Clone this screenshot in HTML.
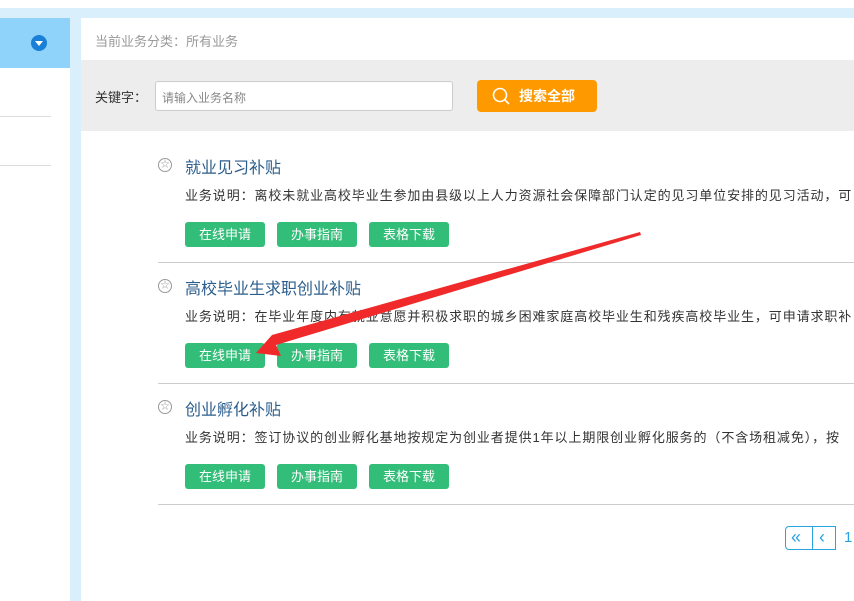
<!DOCTYPE html>
<html><head><meta charset="utf-8"><style>
*{margin:0;padding:0;box-sizing:border-box}
body{width:854px;height:601px;overflow:hidden;background:#fff;font-family:"Liberation Sans","Noto Sans CJK SC",sans-serif;position:relative}
.a{position:absolute}
.btn{position:absolute;width:80px;height:25px;background:#32bd78;border-radius:3px;color:#fff;font-size:13px;text-align:center;line-height:25px}
.t{position:absolute;left:185px;font-size:16px;color:#2b5d8c}
.d{position:absolute;left:185px;font-size:13px;color:#333;white-space:nowrap;letter-spacing:0.9px}
.ic{position:absolute;left:158px;width:14px;height:14px;border:1.5px solid #999;border-radius:50%;font-size:9px;line-height:11px;text-align:center;color:#999}
.sep{position:absolute;left:158px;right:0;height:1px;background:#ccc}
</style></head><body>
<div class="a" style="left:0;top:8px;width:854px;height:10px;background:#d9f0fc"></div>
<div class="a" style="left:70px;top:8px;width:11px;height:593px;background:#d9f0fc"></div>
<div class="a" style="left:0;top:18px;width:70px;height:50px;background:#8fd3fb"></div>
<div class="a" style="left:31px;top:35px;width:16px;height:16px;border-radius:50%;background:#1a7fd6"></div>
<div class="a" style="left:35px;top:41px;width:0;height:0;border-left:4px solid transparent;border-right:4px solid transparent;border-top:5px solid #fff"></div>
<div class="a" style="left:0;top:116px;width:51px;height:1px;background:#ddd"></div>
<div class="a" style="left:0;top:165px;width:51px;height:1px;background:#ddd"></div>
<div class="a" style="left:95px;top:31px;font-size:13px;color:#999">当前业务分类：所有业务</div>
<div class="a" style="left:81px;top:60px;width:773px;height:71px;background:#ededed"></div>
<div class="a" style="left:95px;top:87px;font-size:13px;color:#333">关键字：</div>
<div class="a" style="left:155px;top:81px;width:298px;height:30px;background:#fff;border:1px solid #ccc;border-radius:3px;font-size:12px;color:#888;padding:7px 6px">请输入业务名称</div>
<div class="a" style="left:477px;top:80px;width:120px;height:32px;background:#ff9900;border-radius:4px;color:#fff;font-size:14px;font-weight:bold;line-height:32px;padding-left:42px">搜索全部</div>
<svg class="a" style="left:491px;top:86px" width="22" height="22"><circle cx="9" cy="9" r="6.5" fill="none" stroke="#fff" stroke-width="1.6"/><line x1="13.5" y1="13.5" x2="18" y2="18" stroke="#fff" stroke-width="1.6"/></svg>

<div class="ic" style="top:158px">☆</div>
<div class="t" style="top:154px">就业见习补贴</div>
<div class="d" style="top:185px">业务说明：离校未就业高校毕业生参加由县级以上人力资源社会保障部门认定的见习单位安排的见习活动，可</div>
<div class="btn" style="left:185px;top:222px">在线申请</div><div class="btn" style="left:277px;top:222px">办事指南</div><div class="btn" style="left:369px;top:222px">表格下载</div>
<div class="sep" style="top:262px"></div>

<div class="ic" style="top:279px">☆</div>
<div class="t" style="top:275px">高校毕业生求职创业补贴</div>
<div class="d" style="top:306px">业务说明：在毕业年度内有就业意愿并积极求职的城乡困难家庭高校毕业生和残疾高校毕业生，可申请求职补</div>
<div class="btn" style="left:185px;top:343px">在线申请</div><div class="btn" style="left:277px;top:343px">办事指南</div><div class="btn" style="left:369px;top:343px">表格下载</div>
<div class="sep" style="top:383px"></div>

<div class="ic" style="top:400px">☆</div>
<div class="t" style="top:396px">创业孵化补贴</div>
<div class="d" style="top:427px">业务说明：签订协议的创业孵化基地按规定为创业者提供1年以上期限创业孵化服务的（不含场租减免），按</div>
<div class="btn" style="left:185px;top:464px">在线申请</div><div class="btn" style="left:277px;top:464px">办事指南</div><div class="btn" style="left:369px;top:464px">表格下载</div>
<div class="sep" style="top:504px"></div>

<div class="a" style="left:785px;top:526px;width:51px;height:24px;border:1px solid #29a3e0;border-radius:4px 0 0 4px"></div>
<div class="a" style="left:812px;top:526px;width:1px;height:24px;background:#29a3e0"></div>
<div class="a" style="left:791px;top:527px;font-size:18px;color:#29a3e0">«</div>
<div class="a" style="left:819px;top:527px;font-size:18px;color:#29a3e0">‹</div>
<div class="a" style="left:844px;top:529px;font-size:15px;color:#29a3e0">1</div>

<svg class="a" style="left:0;top:0" width="854" height="601">
<polygon points="640,232 641,235 276,345 281,356 256,353 272,335" fill="#f02a2a"/>
</svg>
</body></html>
